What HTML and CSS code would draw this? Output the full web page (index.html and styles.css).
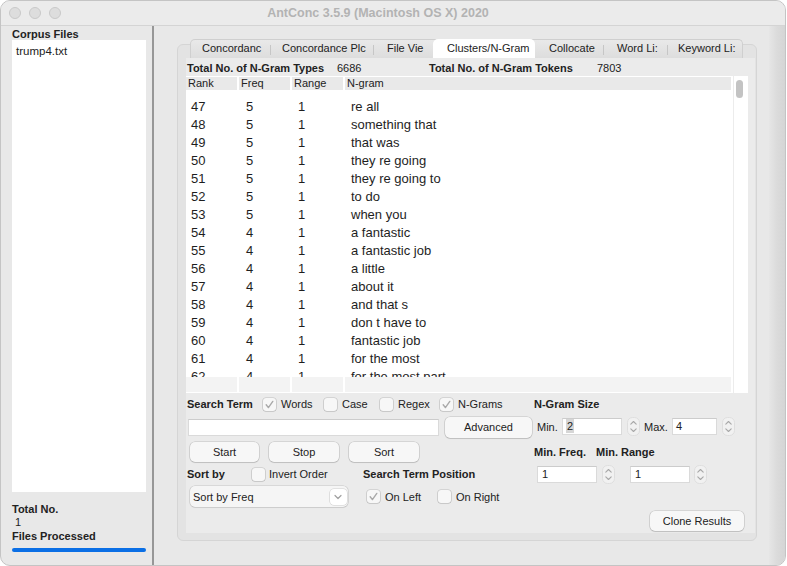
FILE: index.html
```html
<!DOCTYPE html>
<html>
<head>
<meta charset="utf-8">
<title>AntConc</title>
<link rel="stylesheet" href="styles.css">
</head>
<body>
<div class="window">
  <div class="titlebar">
    <div class="lights"><span class="light"></span><span class="light"></span><span class="light"></span></div>
    <div class="title">AntConc 3.5.9 (Macintosh OS X) 2020</div>
  </div>
  <div class="main">
    <div class="left">
      <div class="bold corpus-h">Corpus Files</div>
      <div class="filelist"><div>trump4.txt</div></div>
      <div class="bold total">Total No.</div>
      <div class="count">1</div>
      <div class="bold processed">Files Processed</div>
      <div class="progress"></div>
    </div>
    <div class="divider"></div>
    <div class="right">
      <div class="pane">
        <div class="tabs">
          <div class="tab w1">Concordanc</div>
          <div class="tab w2 sep">Concordance Plc</div>
          <div class="tab w3 sep">File Vie</div>
          <div class="tab w4 sel">Clusters/N-Gram</div>
          <div class="tab w5">Collocate</div>
          <div class="tab w6 sep">Word Li:</div>
          <div class="tab w7 sep">Keyword Li:</div>
        </div>
        <div class="content">
          <div class="stats">
            <div class="bold s1">Total No. of N-Gram Types</div>
            <div class="s2">6686</div>
            <div class="bold s3">Total No. of N-Gram Tokens</div>
            <div>7803</div>
          </div>
          <div class="table">
            <div class="tmain">
              <div class="thead"><div>Rank</div><div>Freq</div><div>Range</div><div>N-gram</div></div>
              <div class="tbody">
                <div class="row"><div class="c1">47</div><div class="c2">5</div><div class="c3">1</div><div class="c4">re all</div></div>
                <div class="row"><div class="c1">48</div><div class="c2">5</div><div class="c3">1</div><div class="c4">something that</div></div>
                <div class="row"><div class="c1">49</div><div class="c2">5</div><div class="c3">1</div><div class="c4">that was</div></div>
                <div class="row"><div class="c1">50</div><div class="c2">5</div><div class="c3">1</div><div class="c4">they re going</div></div>
                <div class="row"><div class="c1">51</div><div class="c2">5</div><div class="c3">1</div><div class="c4">they re going to</div></div>
                <div class="row"><div class="c1">52</div><div class="c2">5</div><div class="c3">1</div><div class="c4">to do</div></div>
                <div class="row"><div class="c1">53</div><div class="c2">5</div><div class="c3">1</div><div class="c4">when you</div></div>
                <div class="row"><div class="c1">54</div><div class="c2">4</div><div class="c3">1</div><div class="c4">a fantastic</div></div>
                <div class="row"><div class="c1">55</div><div class="c2">4</div><div class="c3">1</div><div class="c4">a fantastic job</div></div>
                <div class="row"><div class="c1">56</div><div class="c2">4</div><div class="c3">1</div><div class="c4">a little</div></div>
                <div class="row"><div class="c1">57</div><div class="c2">4</div><div class="c3">1</div><div class="c4">about it</div></div>
                <div class="row"><div class="c1">58</div><div class="c2">4</div><div class="c3">1</div><div class="c4">and that s</div></div>
                <div class="row"><div class="c1">59</div><div class="c2">4</div><div class="c3">1</div><div class="c4">don t have to</div></div>
                <div class="row"><div class="c1">60</div><div class="c2">4</div><div class="c3">1</div><div class="c4">fantastic job</div></div>
                <div class="row"><div class="c1">61</div><div class="c2">4</div><div class="c3">1</div><div class="c4">for the most</div></div>
                <div class="row"><div class="c1">62</div><div class="c2">4</div><div class="c3">1</div><div class="c4">for the most part</div></div>
              </div>
              <div class="tfoot"><div></div><div></div><div></div><div></div></div>
            </div>
            <div class="vscroll"><div class="thumb"></div></div>
          </div>
          <div class="controls">
            <div class="cl">
              <div class="rowA">
                <div class="bold st-lab">Search Term</div>
                <div class="chk k1"><span class="box"><svg width="13" height="13" viewBox="0 0 13 13"><path d="M3.2 6.8 L5.4 9.6 L9.8 3.4" fill="none" stroke="#a9a9a9" stroke-width="1.4" stroke-linecap="round" stroke-linejoin="round"/></svg></span>Words</div>
                <div class="chk k2"><span class="box"></span>Case</div>
                <div class="chk k3"><span class="box"></span>Regex</div>
                <div class="chk"><span class="box"><svg width="13" height="13" viewBox="0 0 13 13"><path d="M3.2 6.8 L5.4 9.6 L9.8 3.4" fill="none" stroke="#a9a9a9" stroke-width="1.4" stroke-linecap="round" stroke-linejoin="round"/></svg></span>N-Grams</div>
              </div>
              <div class="rowB">
                <div class="inp search"></div>
                <div class="btn adv">Advanced</div>
              </div>
              <div class="rowC">
                <div class="btn b1">Start</div>
                <div class="btn b2">Stop</div>
                <div class="btn b2">Sort</div>
              </div>
              <div class="rowD">
                <div class="bold sb-lab">Sort by</div>
                <div class="chk inv"><span class="box"></span>Invert Order</div>
                <div class="bold">Search Term Position</div>
              </div>
              <div class="rowE">
                <div class="select"><span>Sort by Freq</span><span class="chev"><svg width="16" height="16" viewBox="0 0 16 16"><path d="M5 6.5 L8 9.5 L11 6.5" fill="none" stroke="#a0a0a0" stroke-width="1.2" stroke-linecap="round" stroke-linejoin="round"/></svg></span></div>
                <div class="chk onl"><span class="box"><svg width="13" height="13" viewBox="0 0 13 13"><path d="M3.2 6.8 L5.4 9.6 L9.8 3.4" fill="none" stroke="#a9a9a9" stroke-width="1.4" stroke-linecap="round" stroke-linejoin="round"/></svg></span>On Left</div>
                <div class="chk"><span class="box"></span>On Right</div>
              </div>
            </div>
            <div class="cr">
              <div class="bold ng-title">N-Gram Size</div>
              <div class="mm">
                <div class="mm-l1">Min.</div>
                <div class="inp i60"><span class="selx">2</span></div>
                <span class="spin sp1"><svg width="13" height="19" viewBox="0 0 13 19"><rect x="0.5" y="0.5" width="12" height="18" rx="5" fill="#f1f1f1" stroke="#dedede"/><path d="M3.8 7.2 L6.5 4.5 L9.2 7.2" fill="none" stroke="#a8a8a8" stroke-width="1.1" stroke-linecap="round" stroke-linejoin="round"/><path d="M3.8 11.8 L6.5 14.5 L9.2 11.8" fill="none" stroke="#a8a8a8" stroke-width="1.1" stroke-linecap="round" stroke-linejoin="round"/></svg></span>
                <div class="mm-l2">Max.</div>
                <div class="inp i45">4</div>
                <span class="spin sp1"><svg width="13" height="19" viewBox="0 0 13 19"><rect x="0.5" y="0.5" width="12" height="18" rx="5" fill="#f1f1f1" stroke="#dedede"/><path d="M3.8 7.2 L6.5 4.5 L9.2 7.2" fill="none" stroke="#a8a8a8" stroke-width="1.1" stroke-linecap="round" stroke-linejoin="round"/><path d="M3.8 11.8 L6.5 14.5 L9.2 11.8" fill="none" stroke="#a8a8a8" stroke-width="1.1" stroke-linecap="round" stroke-linejoin="round"/></svg></span>
              </div>
              <div class="lbls">
                <div class="bold mf">Min. Freq.</div>
                <div class="bold">Min. Range</div>
              </div>
              <div class="ff">
                <div class="inp i60 f1">1</div>
                <span class="spin sp1"><svg width="13" height="19" viewBox="0 0 13 19"><rect x="0.5" y="0.5" width="12" height="18" rx="5" fill="#f1f1f1" stroke="#dedede"/><path d="M3.8 7.2 L6.5 4.5 L9.2 7.2" fill="none" stroke="#a8a8a8" stroke-width="1.1" stroke-linecap="round" stroke-linejoin="round"/><path d="M3.8 11.8 L6.5 14.5 L9.2 11.8" fill="none" stroke="#a8a8a8" stroke-width="1.1" stroke-linecap="round" stroke-linejoin="round"/></svg></span>
                <div class="inp i60 f2">1</div>
                <span class="spin sp2"><svg width="13" height="19" viewBox="0 0 13 19"><rect x="0.5" y="0.5" width="12" height="18" rx="5" fill="#f1f1f1" stroke="#dedede"/><path d="M3.8 7.2 L6.5 4.5 L9.2 7.2" fill="none" stroke="#a8a8a8" stroke-width="1.1" stroke-linecap="round" stroke-linejoin="round"/><path d="M3.8 11.8 L6.5 14.5 L9.2 11.8" fill="none" stroke="#a8a8a8" stroke-width="1.1" stroke-linecap="round" stroke-linejoin="round"/></svg></span>
              </div>
              <div class="btn clone">Clone Results</div>
            </div>
          </div>
        </div>
      </div>
    </div>
    <div class="edge"></div>
  </div>
</div>
</body>
</html>
```

FILE: styles.css
```css
* { box-sizing: border-box; }
body {
  margin: 0;
  background: #ffffff;
  font-family: "Liberation Sans", Arial, sans-serif;
  font-size: 11px;
  color: #222;
}
.bold { font-weight: bold; }

.window {
  width: 786px;
  height: 566px;
  border: 1px solid #c4c4c4;
  border-radius: 10px;
  overflow: hidden;
  background: #e8e8e8;
  display: flex;
  flex-direction: column;
}
.titlebar {
  height: 25px;
  flex: none;
  display: flex;
  background: #ebebeb;
  border-bottom: 1px solid #d4d4d4;
}
.lights {
  width: 62px;
  display: flex;
  gap: 8px;
  padding: 6px 0 0 8px;
}
.light {
  width: 12px;
  height: 12px;
  border-radius: 50%;
  background: #dddddd;
  border: 1px solid #c8c8c8;
}
.title {
  flex: 1;
  text-align: center;
  padding-right: 92px;
  font-weight: bold;
  font-size: 12.5px;
  line-height: 24px;
  color: #b3b3b3;
}

.main { flex: 1; display: flex; min-height: 0; }

.left { width: 151px; flex: none; padding: 2px 0 0 11px; }
.corpus-h { line-height: 12px; }
.filelist {
  width: 134px;
  height: 452px;
  background: #fff;
  padding: 4px 0 0 4px;
  font-size: 11.5px;
  line-height: 14px;
}
.total { margin-top: 10px; line-height: 14px; }
.count { padding-left: 3px; line-height: 13px; }
.processed { line-height: 14px; }
.progress {
  margin-top: 5px;
  width: 134px;
  height: 4px;
  border-radius: 2px;
  background: #0b6fe5;
}
.divider { width: 2px; flex: none; background: #979797; }

.right { flex: 1; padding: 18px 0 0 23px; }
.edge {
  width: 16px;
  flex: none;
  background: linear-gradient(to right, #e6e6e6, #dbdbdb 50%, #d5d5d5);
}

.pane {
  width: 580px;
  height: 497px;
  background: #e3e3e3;
  border: 1px solid #d5d5d5;
  border-radius: 6px;
  padding: 0 1px 7px 8px;
  display: flex;
  flex-direction: column;
}
.tabs {
  flex: none;
  margin: -6px 0 0 4px;
  width: 553px;
  height: 19px;
  display: flex;
  background: linear-gradient(#e9e9e9, #dddddd);
  border: 1px solid #cfcfcf;
  border-bottom: none;
  border-radius: 5px 5px 0 0;
}
.tab {
  flex: none;
  padding-left: 12px;
  line-height: 17px;
  overflow: hidden;
  white-space: nowrap;
  color: #222;
}
.tab.sep {
  background: linear-gradient(#c6c6c6, #c6c6c6) left 5px / 1px 10px no-repeat;
}
.w1 { width: 79px; padding-left: 11px; }
.w2 { width: 103px; }
.w3 { width: 60px; padding-left: 14px; }
.w4 { width: 102px; padding-left: 14px; }
.w5 { width: 68px; padding-left: 14px; }
.w6 { width: 64px; padding-left: 14px; }
.w7 { width: 75px; padding-left: 11px; }
.tab.sel {
  background: #ffffff;
  border-radius: 5px 5px 0 0;
  margin-top: -1px;
  height: 20px;
  line-height: 19px;
}

.content {
  flex: 1;
  background: #ebebeb;
  display: flex;
  flex-direction: column;
}
.stats {
  flex: none;
  height: 18px;
  padding: 2px 0 0 1px;
  line-height: 16px;
  display: flex;
}
.s1 { width: 150px; }
.s2 { width: 92px; }
.s3 { width: 168px; }

.table {
  flex: none;
  width: 562px;
  height: 317px;
  display: flex;
  background: #fff;
}
.tmain { width: 547px; display: flex; flex-direction: column; }
.thead, .row, .tfoot {
  display: grid;
  grid-template-columns: 53px 53px 53px 1fr;
}
.thead { flex: none; margin-top: 1px; height: 13px; line-height: 13px; }
.thead div { background: #e9e9e9; margin-right: 2px; padding-left: 2px; color: #222; }
.tbody { height: 287px; overflow: hidden; flex: none; padding-top: 8px; }
.row { height: 18px; line-height: 18px; font-size: 13px; color: #1e1e1e; }
.c1 { padding-left: 5px; }
.c2 { padding-left: 7px; }
.c3 { padding-left: 6px; }
.c4 { padding-left: 6px; white-space: nowrap; }
.tfoot { flex: none; height: 15px; }
.tfoot div { background: #f3f3f3; margin-right: 2px; }
.vscroll {
  width: 15px;
  border-left: 1px solid #ececec;
  padding: 4px 0 0 2px;
}
.thumb { width: 7px; height: 18px; border-radius: 4px; background: #c3c3c3; }

.controls { flex: 1; display: flex; padding-top: 5px; }
.cl { width: 348px; flex: none; }
.cr { width: 214px; flex: none; }

.rowA, .rowB, .rowC, .rowD, .rowE, .mm, .ff, .lbls { display: flex; align-items: center; }
.rowA { height: 13px; line-height: 13px; }
.st-lab { margin-left: 1px; width: 76px; }
.chk { display: flex; align-items: center; white-space: nowrap; }
.k1 { width: 61px; }
.k2 { width: 56px; }
.k3 { width: 60px; }
.box {
  width: 13px;
  height: 13px;
  flex: none;
  margin-right: 5px;
  border-radius: 3px;
  background: #f7f7f7;
  box-shadow: 0 0 0 0.6px rgba(0,0,0,0.2), 0 1px 1px rgba(0,0,0,0.06);
}
.box svg { display: block; }

.rowB { margin-top: 6px; height: 21px; }
.inp {
  background: #fff;
  border: 1px solid #dadada;
  border-top-color: #cccccc;
  height: 17px;
  line-height: 15px;
  padding-left: 3px;
  color: #222;
}
.search { margin-left: 2px; width: 251px; }
.btn {
  background: #f7f7f7;
  border-radius: 5px;
  box-shadow: 0 0 0 0.6px rgba(0,0,0,0.18), 0 1px 1px rgba(0,0,0,0.1);
  text-align: center;
  color: #222;
}
.adv { margin-left: 6px; width: 87px; height: 21px; line-height: 21px; }

.rowC { margin-top: 4px; height: 20px; }
.rowC .btn { height: 20px; line-height: 20px; }
.b1 { margin-left: 4px; width: 69px; }
.b2 { margin-left: 10px; width: 70px; }

.rowD { margin-top: 6px; height: 13px; line-height: 13px; }
.sb-lab { margin-left: 1px; width: 65px; }
.inv { width: 111px; }
.inv .box { margin-right: 4px; }

.rowE { margin-top: 5px; height: 21px; }
.select {
  margin-left: 4px;
  width: 158px;
  height: 21px;
  display: flex;
  align-items: center;
  justify-content: space-between;
  padding: 0 1px 0 3px;
  background: #f5f5f5;
  border-radius: 5px;
  box-shadow: 0 0 0 0.6px rgba(0,0,0,0.16), 0 1px 1px rgba(0,0,0,0.06);
}
.chev {
  width: 17px;
  height: 16px;
  background: #fff;
  border-radius: 4px;
  box-shadow: 0 0 0 0.6px rgba(0,0,0,0.16);
}
.chev svg { display: block; }
.onl { margin-left: 19px; width: 71px; }

.ng-title { height: 13px; line-height: 13px; }
.mm { margin-top: 6px; height: 19px; }
.mm-l1 { margin-left: 3px; width: 25px; }
.mm-l2 { margin-left: 4px; width: 28px; }
.i60 { width: 60px; }
.i45 { width: 45px; }
.selx { background: #d6d6d6; padding: 1px 1px; }
.spin { display: block; width: 13px; height: 19px; flex: none; }
.spin svg { display: block; }
.sp1 { margin-left: 5px; }
.sp2 { margin-left: 4px; }
.lbls { margin-top: 10px; height: 12px; line-height: 12px; }
.mf { width: 62px; }
.ff { margin-top: 7px; height: 19px; }
.f1 { margin-left: 3px; padding-left: 4px; }
.f2 { margin-left: 15px; padding-left: 4px; }
.clone { margin-top: 27px; margin-left: 116px; width: 94px; height: 20px; line-height: 20px; }
```
